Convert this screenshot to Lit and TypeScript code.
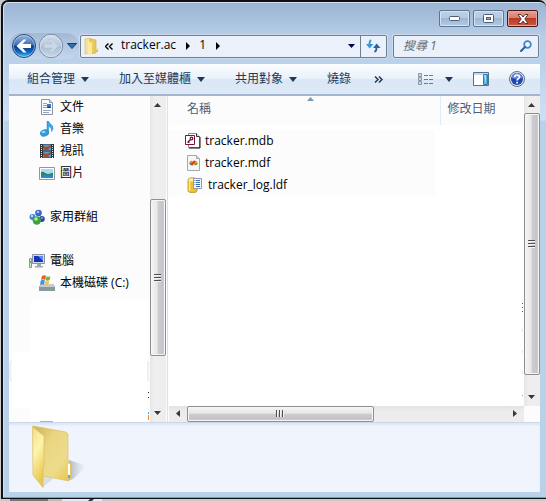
import { LitElement, html, css, svg } from "lit";
import { customElement, property } from "lit/decorators.js";
import { styleMap } from "lit/directives/style-map.js";

const down = html`<svg width="8" height="5" viewBox="0 0 8 5" aria-hidden="true"><path d="M0 0H8L4 5Z" fill="#1e395b" /></svg>`;

const icons = {
  document: html`<svg width="16" height="16" viewBox="0 0 16 16">
    <path d="M2.500 .5h8l3 3v12h-11z" fill="#fbfcfd" stroke="#8b949e" />
    <path d="M10.500 .5v3h3" fill="#dfe4ea" stroke="#8b949e" />
    <path d="M4 4.500h4M4 6.500h4M4 8.500h4M4 11.500h8M4 13.500h6" stroke="#93a7c4" />
    <path d="M8 5h4v4H8z" fill="#3a78c0" /><path d="M8 9l2-2 2 2z" fill="#21406c" />
  </svg>`,
  music: html`<svg width="16" height="16" viewBox="0 0 16 16">
    <path d="M8 0h1.500c.5 3 4.500 3.500 4.500 7 0 1.500-.5 2.500-1.500 3.500.6-3-1-4.500-3-5V12H8z" fill="#3ba7e4" stroke="#2384c4" stroke-width=".5" />
    <ellipse cx="5.500" cy="12" rx="4.300" ry="3.200" transform="rotate(-15 5.500 12)" fill="#2f9de0" stroke="#1e7dbd" stroke-width=".5" />
    <ellipse cx="4.500" cy="11" rx="2" ry="1" fill="#9fdcfa" />
  </svg>`,
  video: html`<svg width="16" height="16" viewBox="0 0 16 16">
    <path d="M1 1h14v14H1z" fill="#2d3238" /><path d="M4 1.500h8v6H4zM4 8.500h8v6H4z" fill="#4ba5dc" />
    <path d="M4 2l3 2 5-2v2L9 6l2 1.500H6L4 5zM4 9l3 2 5-2v2l-3 2 2 1.500H6L4 12z" fill="#a34a32" />
    <path d="M2.500 2v13M13.500 2v13" stroke="#e6ecee" stroke-width="1" stroke-dasharray="1 1" />
  </svg>`,
  picture: html`<svg width="16" height="16" viewBox="0 0 16 16">
    <path d="M.5 2.500h15v12H.5z" fill="#fff" stroke="#8f979f" /><path d="M2 4h12v9H2z" fill="#a9dcf3" />
    <path d="M2 7c3-1 4 2 7 2 2 0 4-2 5-1v5H2z" fill="#2b8576" /><path d="M2 10.500h12V13H2z" fill="#2f86c4" />
  </svg>`,
  homegroup: html`<svg width="16" height="16" viewBox="0 0 16 16">
    <circle cx="9.500" cy="4" r="3.300" fill="#3c63c8" /><circle cx="3.500" cy="8" r="3" fill="#3f86d8" />
    <circle cx="12.800" cy="10" r="3" fill="#2c48b0" /><circle cx="7.800" cy="11.500" r="4.200" fill="#3ba33c" />
    <circle cx="9" cy="3" r="1.300" fill="#a8c4f4" /><circle cx="3" cy="7" r="1.200" fill="#b6dcfa" />
    <circle cx="7" cy="10" r="1.700" fill="#b4ecae" /><circle cx="13" cy="9" r="1" fill="#8ea8ec" />
  </svg>`,
  computer: html`<svg width="16" height="16" viewBox="0 0 16 16">
    <path d="M.5 5.500h2v9h-2z" fill="#d8dcdf" stroke="#8e959b" /><path d="M1 8h1v2H1z" fill="#4bc63e" />
    <path d="M3.500 1.500h12v9h-12z" fill="#d3dae4" stroke="#8a929c" /><path d="M5 3h9v6H5z" fill="#1632bd" />
    <path d="M9 3h5v5z" fill="#5c8af0" /><path d="M8 11h4v2h2v1.500H6V13h2z" fill="#a2a9b0" />
  </svg>`,
  drive: html`<svg width="16" height="16" viewBox="0 0 16 16">
    <path d="M2 9h12l2 3v4H0v-4z" fill="#8d979f" /><path d="M2 9h12l1.500 3H.5z" fill="#c5ccd1" />
    <path d="M12 13h2v1h-2z" fill="#40d040" />
    <path d="M3 1c1.500-1 3-1 4 0L6 5C5 4 3.500 4 2 5z" fill="#ee5a24" /><path d="M7.500 1.200c1 .8 2.500 .8 4 0L10.500 5c-1.500 1-3 1-4 0z" fill="#6db934" />
    <path d="M1.800 5.600c1.500-1 3-1 4 0L5 9.500H1z" fill="#3e94dc" /><path d="M6.300 5.800c1 .8 2.500 .8 4 0L9.500 9.500h-4z" fill="#fbc52b" />
  </svg>`,
  mdb: html`<svg width="16" height="16" viewBox="0 0 16 16">
    <path d="M3.500 .5h8l3 3v11h-11z" fill="#fff" stroke="#8a8a8a" /><path d="M11.500 .5v3h3" fill="#e8e8e8" stroke="#333" /><path d="M15 4v11H4" fill="none" stroke="#111" />
    <path d="M.5 2.500h9v9h-9z" fill="#fff" stroke="#7b1538" />
    <circle cx="6.500" cy="5.500" r="1.300" fill="none" stroke="#7b1538" stroke-width="1.300" /><path d="M5.500 6.500L2.500 9.500M3 8l1.500 1.500" stroke="#7b1538" stroke-width="1.300" />
  </svg>`,
  mdf: html`<svg width="16" height="16" viewBox="0 0 16 16">
    <path d="M2.500 .5h9l3 3v12h-12z" fill="#f5f6f6" stroke="#a5a8ab" /><path d="M11.500 .5v3h3" fill="#ddd" stroke="#a5a8ab" />
    <path d="M8 9.500C6.500 11 4.500 10 4.500 8S6.500 5 8 6.500z" fill="#e8862d" /><path d="M4.500 8c0 2 2 3 3.500 1.500L7 8z" fill="#3e8cd0" />
    <path d="M9 6.500C10.500 5 12.500 6 12.500 8S10.500 11 9 9.500z" fill="#efb02a" /><path d="M12.500 8c0 2-2 3-3.500 1.500L10.500 8z" fill="#54a73c" />
    <path d="M6.500 10L10 6" stroke="#d83d22" stroke-width="2" />
  </svg>`,
  ldf: html`<svg width="19" height="16" viewBox="0 0 19 16">
    <path d="M3 3c0-3 9-3 9 0v10.500c0 3-9 3-9 0z" fill="#edc02f" stroke="#a87f14" stroke-width=".7" />
    <path d="M4.500 3v11" stroke="#fbe999" stroke-width="1.500" /><ellipse cx="7.500" cy="2.800" rx="4" ry="1.600" fill="#fdf0ac" />
    <path d="M8.500 1.500h8v10h-8z" fill="#f4f8fd" stroke="#8a9cb4" /><path d="M11 3.500h4M11 5.500h4M11 7.500h4M11 9.500h4M9.500 3.500h.8M9.500 5.500h.8M9.500 7.500h.8" stroke="#3e6ab2" />
  </svg>`,
};

type IconName = keyof typeof icons;

@customElement("scroll-track")
class ScrollTrack extends LitElement {
  @property({ type: Boolean, reflect: true }) horizontal = false;
  @property({ type: Number }) before = 0;
  @property({ type: Number }) size = 1;
  @property({ type: Number }) after = 0;

  static styles = css`
    :host { display: flex; flex-direction: column; background: linear-gradient(90deg, #e6e6e6, #efefef 30%, #ededed); }
    :host([horizontal]) { flex-direction: row; background: linear-gradient(#e2e2e2, #ececec 30%, #ededed); }
    button { flex: none; display: grid; place-items: center; width: 16px; height: 17px; border: 0; padding: 0; background: none; }
    :host([horizontal]) button { width: 18px; height: 16px; }
    .thumb { display: grid; place-items: center; box-sizing: border-box; border: 1px solid #8f8f8f; border-radius: 2px; box-shadow: inset 0 0 0 1px #f6f6f6; background: linear-gradient(90deg, #f5f5f5, #e6e6e8 45%, #cdcdd1 50%, #c4c4ca 85%, #dcdcdf); }
    :host([horizontal]) .thumb { background: linear-gradient(#f5f5f5, #e6e6e8 45%, #cdcdd1 50%, #c2c2c8 85%, #dcdcdf); }
    svg { display: block; }
  `;

  render() {
    const h = this.horizontal;
    const grow = (n: number) => styleMap({ flex: `${n} 1 0` });
    const arrow = (d: string, label: string) => html`<button aria-label=${label}>
      <svg width="8" height="8" viewBox="0 0 8 8"><path d=${d} fill="#383838" /></svg></button>`;
    return html`
      ${h ? arrow("M6 0V7L2 3.500Z", "Left") : arrow("M0 6H7L3.500 2Z", "Up")}
      <div style=${grow(this.before)}></div>
      <div class="thumb" style=${grow(this.size)}>
        <svg width="8" height="8" viewBox="0 0 8 8">
          ${h
            ? svg`<path d="M.5 0V7M3.500 0V7M6.500 0V7" stroke="#4d4d52" /><path d="M1.500 0V7M4.500 0V7M7.500 0V7" stroke="#f4f4f4" />`
            : svg`<path d="M0 .5H7M0 3.500H7M0 6.500H7" stroke="#4d4d52" /><path d="M0 1.500H7M0 4.500H7M0 7.500H7" stroke="#f4f4f4" />`}
        </svg>
      </div>
      <div style=${grow(this.after)}></div>
      ${h ? arrow("M2 0V7L6 3.500Z", "Right") : arrow("M0 1H7L3.500 5Z", "Down")}
    `;
  }
}

interface Place { name: string; icon: IconName; depth: number; gap?: boolean }

@customElement("app-root")
class AppRoot extends LitElement {
  places: Place[] = [
    { name: "文件", icon: "document", depth: 1 },
    { name: "音樂", icon: "music", depth: 1 },
    { name: "視訊", icon: "video", depth: 1 },
    { name: "圖片", icon: "picture", depth: 1 },
    { name: "家用群組", icon: "homegroup", depth: 0, gap: true },
    { name: "電腦", icon: "computer", depth: 0, gap: true },
    { name: "本機磁碟 (C:)", icon: "drive", depth: 1 },
  ];
  files: { name: string; icon: IconName }[] = [
    { name: "tracker.mdb", icon: "mdb" },
    { name: "tracker.mdf", icon: "mdf" },
    { name: "tracker_log.ldf", icon: "ldf" },
  ];

  static styles = css`
    :host { display: flex; flex-direction: column; min-height: 100vh; background: #c9cacb; font: 12px/22px "Open Sans", "Noto Sans CJK TC", sans-serif; color: #000; }
    * { box-sizing: border-box; }
    svg { display: block; flex: none; }
    button { display: flex; align-items: center; justify-content: center; margin: 0; padding: 0; border: 0; background: none; font: inherit; color: inherit; }
    .window { flex: 1; display: flex; flex-direction: column; margin-left: 1px; padding: 0 6px 6px 6px; border: solid #101114; border-width: 2px 0 1px 2px; border-radius: 7px 7px 0 0; background: linear-gradient(#9ab4d2, #a9c1de 18px, #b9cfe9 36px, #bad1ea 60px, #d0e0f4 118px, #bad1ea 119px); box-shadow: inset 0 -1px #35b8d4, inset 1px 1px #d3e3f4; }
    .titlebar { display: flex; justify-content: flex-end; gap: 3px; height: 32px; padding: 8px 2px 0; }
    .titlebar button { width: 31px; height: 17px; border: 1px solid #5f7692; border-radius: 2px; box-shadow: inset 0 0 0 1px #d5e3f2; background: linear-gradient(#bdd0e6, #b6cae2 48%, #9db7d5 50%, #b3cae5); }
    .titlebar .close { border-color: #4d1418; box-shadow: inset 0 0 0 1px #e8a89d; background: linear-gradient(#e4a094, #d57f70 46%, #b93a22 50%, #c75a41); }
    .navigation { display: flex; align-items: center; height: 24px; padding-right: 1px; }
    .travel { display: flex; align-items: center; gap: 1px; height: 26px; margin-right: 1px; padding: 0 2px; border-radius: 13px; background: linear-gradient(#a2b9d3, #c5d7ec); }
    .travel .recent { margin-left: 2px; }
    .address { flex: 1; display: flex; height: 23px; border: 1px solid #6e7e90; border-radius: 2px; box-shadow: 0 0 0 1px #cbdcf0; background: #ebf1fa; }
    .address ol { flex: 1; display: flex; align-items: center; margin: 0; padding: 0 0 0 3px; list-style: none; }
    .address li { display: flex; align-items: center; }
    .address a { padding: 0 10px 2px 8px; color: #000; text-decoration: none; }
    .address .icon-only { padding: 0 0 0 6px; }
    .address .history { width: 18px; }
    .address .refresh { width: 26px; border-left: 1px solid #6e7e90; }
    .search { display: flex; align-items: center; width: 146px; height: 23px; margin-left: 6px; padding: 0 6px 0 9px; border: 1px solid #6e7e90; border-radius: 2px; box-shadow: 0 0 0 1px #cbdcf0; background: #ebf1fa; }
    .search input { flex: 1; min-width: 0; padding: 0; border: 0; outline: 0; background: none; font: inherit; }
    .search input::placeholder { color: #666c74; font-style: italic; opacity: 1; }
    .toolbar { display: flex; align-items: center; height: 32px; margin-top: 6px; padding: 0 7px 0 3px; border-bottom: 2px solid #a3b4cf; background: linear-gradient(#fbfdff, #e9f1fa 48%, #dbe7f5 52%, #dde9f6); color: #1e395b; }
    .toolbar button { gap: 6px; height: 28px; padding: 0 15px; white-space: nowrap; }
    .toolbar .tight { padding: 0 8px; }
    .toolbar .views { gap: 11px; padding: 0; margin: 0 12px 0 auto; }
    .toolbar .help { padding: 0 8px 0 12px; }
    .body { flex: 1; display: flex; min-height: 0; background: #fcfcfc; }
    .tree { position: relative; width: 159px; display: flex; border-right: 1px solid #d5e2f2; }
    .places { flex: 1; margin: 0; padding: 0; list-style: none; }
    .places li { display: flex; }
    .places .gap { margin-top: 22px; }
    .places a { display: flex; align-items: center; gap: 5px; padding-left: 20px; color: #000; text-decoration: none; white-space: nowrap; }
    .places .nested a { padding-left: 30px; }
    .tree scroll-track { width: 16px; margin-right: 1px; }
    .traces { position: absolute; left: 0; bottom: 0; }
    .content { flex: 1; min-width: 0; display: grid; grid-template: minmax(0, 1fr) 16px / minmax(0, 1fr) 16px; margin-left: 1px; }
    .list { position: relative; overflow: hidden; background: #fff; }
    table { width: 100%; border-collapse: collapse; table-layout: fixed; }
    th { position: relative; height: 29px; padding: 0 0 4px 18px; background: #fcfcfc; text-align: left; font-weight: 400; color: #4c607a; }
    th + th { padding-left: 7px; border-left: 1px solid #dfecf8; }
    .name-column { width: 271px; }
    .sort { position: absolute; left: 138px; top: 1px; }
    td { padding: 0 0 0 16px; }
    tbody td:first-child { background: linear-gradient(90deg, #fcfcfc 266px, #fff 266px); }
    tbody::before { content: ""; display: block; height: 5px; }
    .file { display: flex; align-items: center; gap: 4px; height: 22px; }
    .more { position: absolute; right: 0; bottom: 0; }
    .details { height: 70px; padding: 2px 0 0 20px; border-top: 1px solid #cbd8e9; box-shadow: inset 0 2px 2px #dce7f4; background: #f0f4fc; }
    .behind { height: 2px; }
  `;

  render() {
    return html`
      <div class="window">
        <header class="titlebar">
          <button aria-label="最小化"><svg width="11" height="5" viewBox="0 0 11 5"><rect x=".5" y=".5" width="10" height="4" rx="1" fill="#fff" stroke="#4e5d70" /></svg></button>
          <button aria-label="最大化"><svg width="11" height="9" viewBox="0 0 11 9"><rect x=".5" y=".5" width="10" height="8" rx="1" fill="#fff" stroke="#4e5d70" /><rect x="3.500" y="3.500" width="4" height="2" fill="#9eb5d0" stroke="#4e5d70" /></svg></button>
          <button class="close" aria-label="關閉"><svg width="12" height="10" viewBox="0 0 12 10"><path d="M1 .5h3l2 2.500 2-2.500h3L7.800 5 11 9.500H8L6 7 4 9.500H1L4.200 5z" fill="#fff" stroke="#59383c" /></svg></button>
        </header>

        <nav class="navigation">
          <div class="travel">
            <button aria-label="上一頁"><svg width="26" height="26" viewBox="0 0 26 26">
              <defs><linearGradient id="b" x2="0" y2="1"><stop stop-color="#9fb9df" /><stop offset=".45" stop-color="#3f70b5" /><stop offset=".5" stop-color="#0c3b8d" /><stop offset=".75" stop-color="#1262b8" /><stop offset="1" stop-color="#35d0f6" /></linearGradient></defs>
              <circle cx="13" cy="13" r="11.500" fill="url(#b)" stroke="#2a4a7b" /><circle cx="13" cy="13" r="10.500" fill="none" stroke="#b9d3ee" opacity=".6" />
              <path d="M5.500 13l7-6.500h3L11.500 11H20v4h-8.500l4 4.500h-3z" fill="#fff" />
            </svg></button>
            <button aria-label="下一頁"><svg width="26" height="26" viewBox="0 0 26 26">
              <defs><linearGradient id="f" x2="0" y2="1"><stop stop-color="#d2deec" /><stop offset=".48" stop-color="#b8cadd" /><stop offset=".52" stop-color="#a7bdd5" /><stop offset="1" stop-color="#cbdaea" /></linearGradient></defs>
              <circle cx="13" cy="13" r="11.700" fill="url(#f)" stroke="#758ca8" /><circle cx="13" cy="13" r="10.700" fill="none" stroke="#dce8f4" opacity=".7" />
              <path d="M20.500 13l-7-6.500h-3l4 4.500H6v4h8.500l-4 4.500h3z" fill="#cbd8e6" stroke="#b2c4d7" stroke-width=".6" />
            </svg></button>
            <button class="recent" aria-label="最近的頁面"><svg width="10" height="6" viewBox="0 0 10 6"><path d="M.5 .5h9L5 5.500z" fill="#2e74b4" stroke="#173c6c" /></svg></button>
          </div>
          <div class="address">
            <ol>
              <li><svg width="15" height="17" viewBox="0 0 15 17"><path d="M1 1l6-1v14l-6 2z" fill="#f7e192" stroke="#d9b951" stroke-width=".6" /><path d="M6 1l6 1v13l-6 1z" fill="#ecc95b" stroke="#cfa73e" stroke-width=".6" /><path d="M4 3l4 2v12l-4-2z" fill="#fbeaa6" /><path d="M12 9l2 1v4l-2 1z" fill="#f6d976" /><path d="M12.500 12h1v2h-1z" fill="#56b3e8" /></svg></li>
              <li><a class="icon-only" href="#" aria-label="上層資料夾"><svg width="8" height="7" viewBox="0 0 8 7"><path d="M3.500 .5l-3 3 3 3M7.500 .5l-3 3 3 3" fill="none" stroke="#000" stroke-width="1.400" /></svg></a></li>
              <li><a href="#">tracker.ac</a><svg width="5" height="8" viewBox="0 0 5 8"><path d="M0 0v8l4-4z" /></svg></li>
              <li><a href="#">1</a><svg width="5" height="8" viewBox="0 0 5 8"><path d="M0 0v8l4-4z" /></svg></li>
            </ol>
            <button class="history" aria-label="先前的位置"><svg width="7" height="4" viewBox="0 0 7 4"><path d="M0 0h7L3.500 4z" fill="#00004e" /></svg></button>
            <button class="refresh" aria-label="重新整理"><svg width="15" height="14" viewBox="0 0 15 14"><path d="M5 1C3 2.500 3.500 4 3.500 6" fill="none" stroke="#3f94cf" stroke-width="2" /><path d="M0 5h7.500L3.700 9.500z" fill="#3f94cf" /><path d="M10.500 8c0 2 .5 3.500-2 5" fill="none" stroke="#2a62a6" stroke-width="2" /><path d="M7 9h7.500l-3.800-4.500z" fill="#2a62a6" /></svg></button>
          </div>
          <label class="search">
            <input type="search" placeholder="搜尋 1" aria-label="搜尋 1" />
            <svg width="12" height="12" viewBox="0 0 12 12"><circle cx="7.500" cy="4.500" r="3.300" fill="#f4faff" stroke="#3d86c9" stroke-width="1.800" /><path d="M5 7L1 11" stroke="#2a5f9f" stroke-width="2" stroke-linecap="round" /></svg>
          </label>
        </nav>

        <div class="toolbar" role="toolbar">
          <button>組合管理${down}</button>
          <button>加入至媒體櫃${down}</button>
          <button>共用對象${down}</button>
          <button>燒錄</button>
          <button class="tight" aria-label="更多命令"><svg width="9" height="7" viewBox="0 0 9 7"><path d="M1 .5l3 3-3 3M5 .5l3 3-3 3" fill="none" stroke="#1e395b" stroke-width="1.500" /></svg></button>
          <button class="views" aria-label="變更檢視"><svg width="16" height="13" viewBox="0 0 16 13"><path d="M.5 .5h3v3h-3zM.5 4.500h3v3h-3zM.5 8.500h3v3h-3z" fill="#fff" stroke="#8695a8" /><path d="M1.500 2h1M1.500 10h1" stroke="#3b7abf" /><path d="M1.500 6h1" stroke="#d0342c" /><path d="M6 2.500h4M11 2.500h4M6 6.500h4M11 6.500h4M6 10.500h4M11 10.500h4" stroke="#6c7a8e" /></svg>${down}</button>
          <button class="tight" aria-label="預覽窗格"><svg width="16" height="14" viewBox="0 0 16 14"><path d="M.5 .5h15v13H.5z" fill="#fff" stroke="#55708c" /><path d="M1 1h14v2H1z" fill="#c8d8e8" /><path d="M10.500 2.500h4v10h-4z" fill="#54b4e4" stroke="#2c7faf" /><path d="M11 3h2v9z" fill="#a6e1f8" /></svg></button>
          <button class="help" aria-label="說明"><svg width="16" height="16" viewBox="0 0 16 16"><circle cx="8" cy="8" r="7.500" fill="#e3e8ee" stroke="#62707f" /><circle cx="8" cy="8" r="6" fill="#2045af" /><path d="M2.500 7a5.500 5 0 0 1 11 0c-3 1-8 1-11 0z" fill="#6688dc" /><path d="M5.700 6.200c0-3 4.800-2.800 4.800-.3 0 1.700-2.400 1.700-2.400 3.600" fill="none" stroke="#fff" stroke-width="1.700" /><path d="M7.200 10.800h1.800v1.800H7.200z" fill="#fff" /></svg></button>
        </div>

        <main class="body">
          <nav class="tree">
            <svg class="traces" width="141" height="122" viewBox="0 0 141 122" aria-hidden="true">
              <path d="M22 0h117v122H22zM3 52h136v56H3z" fill="#fff" />
              <path d="M3 61q-2 0-2 3v14q0 3 2 3M139 61v20" fill="none" stroke="#e2e2e2" />
              <path d="M139 92h1v1h-1zM139 97h1v1h-1z" fill="#302040" /><path d="M139 112h1v2h-1z" fill="#38aee4" /><path d="M139 115h1v5h-1z" fill="#e8892b" />
              <path d="M31 121h13v1H31z" fill="#d9b53c" />
            </svg>
            <ul class="places">
              ${this.places.map((p) => html`<li class="${p.depth ? "nested" : ""} ${p.gap ? "gap" : ""}"><a href="#">${icons[p.icon]}${p.name}</a></li>`)}
            </ul>
            <scroll-track .before=${87} .size=${156} .after=${49}></scroll-track>
          </nav>
          <section class="content">
            <div class="list">
              <table>
                <thead><tr>
                  <th class="name-column" aria-sort="ascending">名稱<svg class="sort" width="7" height="4" viewBox="0 0 7 4"><path d="M3.500 0L7 4H0z" fill="#6d9cbd" /></svg></th>
                  <th>修改日期</th>
                </tr></thead>
                <tbody>
                  ${this.files.map((f) => html`<tr><td><div class="file">${icons[f.icon]}${f.name}</div></td><td></td></tr>`)}
                </tbody>
              </table>
              <svg class="more" width="2" height="105" viewBox="0 0 2 105" aria-hidden="true"><path d="M0 2h1v1H0zM0 6h1v1H0zM0 10h1v1H0z" fill="#555" /><path d="M0 28h1v3H0zM0 49h1v3H0zM0 70h1v3H0z" fill="#c9f3f5" /><path d="M0 94h1v1H0z" fill="#7aaef0" /></svg>
            </div>
            <scroll-track .before=${0} .size=${258} .after=${14}></scroll-track>
            <scroll-track horizontal .before=${0} .size=${186} .after=${133}></scroll-track>
          </section>
        </main>

        <footer class="details">
          <svg width="60" height="66" viewBox="0 0 60 66" aria-hidden="true">
            <defs>
              <linearGradient id="back" x2="1" y2="1"><stop stop-color="#cfaf50" /><stop offset=".35" stop-color="#ead581" /><stop offset=".7" stop-color="#eddb8d" /><stop offset="1" stop-color="#e9c43f" /></linearGradient>
              <linearGradient id="front" x2=".3" y2="1"><stop stop-color="#f1dc81" /><stop offset=".45" stop-color="#fff3ad" /><stop offset="1" stop-color="#e9c94c" /></linearGradient>
              <linearGradient id="shade"><stop stop-color="#8c95a5" stop-opacity=".75" /><stop offset="1" stop-color="#c5ccd8" stop-opacity="0" /></linearGradient>
            </defs>
            <path d="M40 35l18 6-14 13-6 2z" fill="url(#shade)" /><path d="M4 50l10 12 10-8-10-12z" fill="#b9bfc9" opacity=".4" />
            <path d="M4 1l33 6 2 2v27l3 3v13l-2 1v3L14 51z" fill="url(#back)" stroke="#d9bd59" stroke-width=".6" />
            <path d="M39 39h2v14h-2z" fill="#fff" /><path d="M39 50h2v3h-2z" fill="#5ba6ea" />
            <path d="M3.500 1.500L15 11v29l-1 3v19.500L4 50z" fill="url(#front)" stroke="#d7bd62" stroke-width=".7" />
          </svg>
        </footer>
      </div>
      <svg class="behind" width="100%" height="2" aria-hidden="true"><path d="M10 0h38v2H10z" fill="#73777a" /><path d="M48 0h14v2H48z" fill="#babcbe" /><path d="M62 0h40v2H62z" fill="#e3eaf3" /><path d="M90 0h4l-2 2h-4z" fill="#34383c" /></svg>
    `;
  }
}
